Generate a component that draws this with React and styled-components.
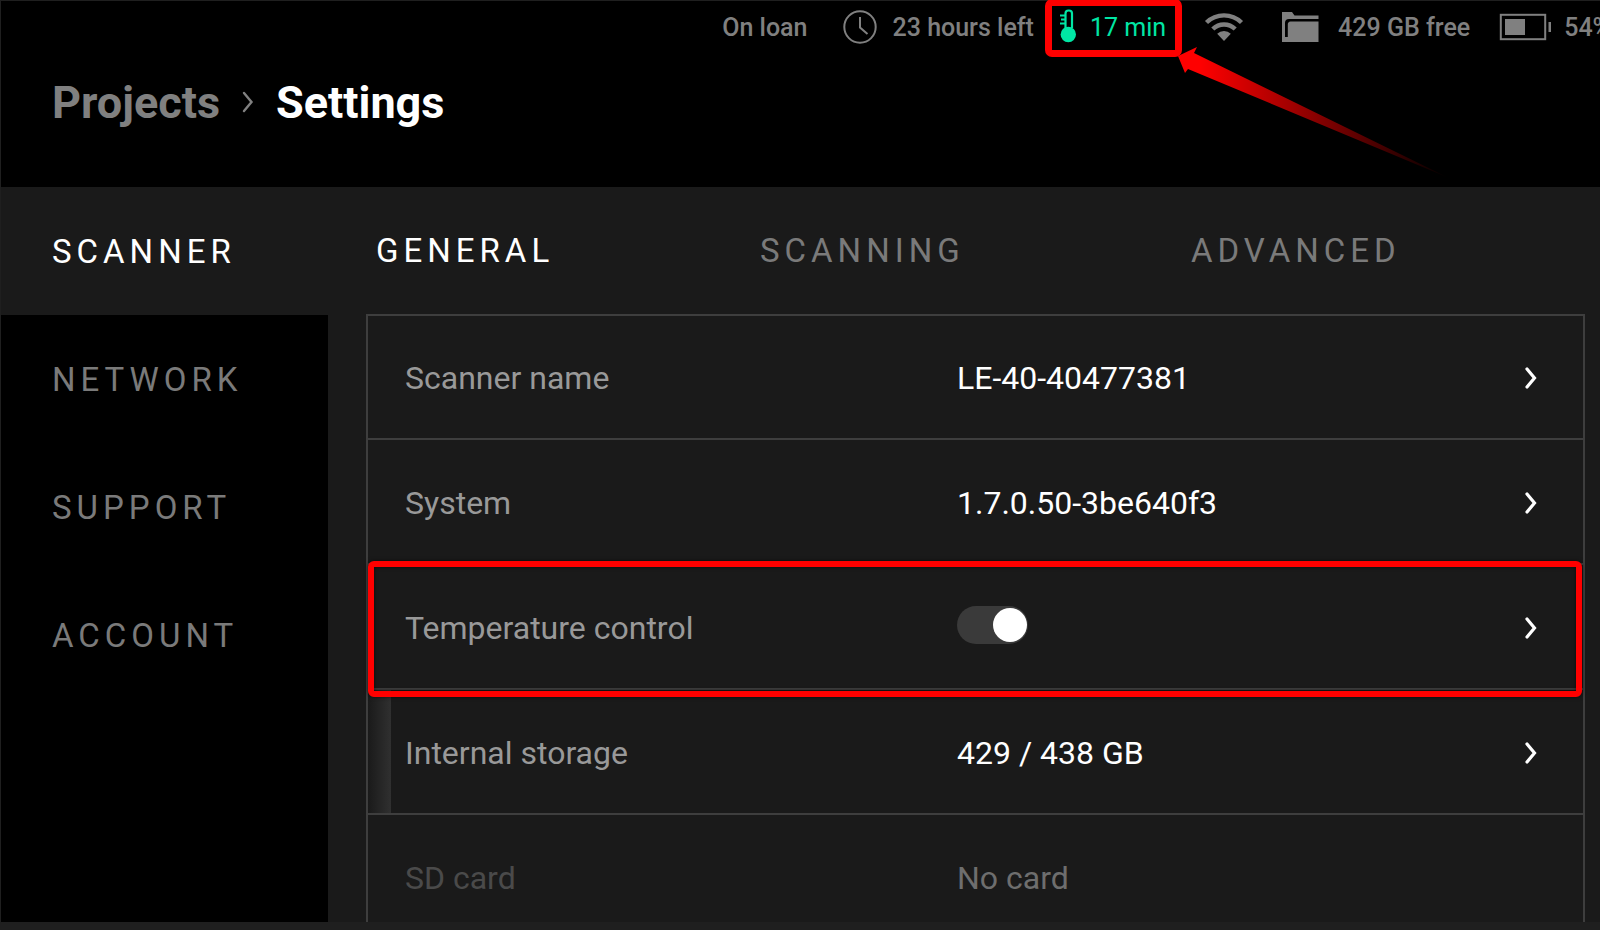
import React, { useState } from 'react';
import styled, { createGlobalStyle } from 'styled-components';

const GlobalStyle = createGlobalStyle`
  * {
    box-sizing: border-box;
  }

  body {
    margin: 0;
    background: #1f1f1f;
    font-family: Roboto, "Liberation Sans", sans-serif;
  }

  a {
    color: inherit;
    text-decoration: none;
  }

  button {
    padding: 0;
    border: none;
    background: none;
    color: inherit;
    font: inherit;
    cursor: pointer;
  }
`;

const Page = styled.div`
  display: flex;
  flex-direction: column;
  height: 100vh;
  padding: 1px 0 8px 1px;
  overflow: hidden;
`;

const Header = styled.header`
  flex-shrink: 0;
  height: 186px;
  background: #000;
`;

const StatusBar = styled.div`
  display: flex;
  justify-content: flex-end;
  align-items: center;
  gap: 26px;
  height: 52px;
  margin-right: -11px;
  color: #808080;
  font-size: 25px;
  font-weight: 500;
  white-space: nowrap;
`;

const Status = styled.div`
  position: relative;
  display: flex;
  align-items: center;
  gap: 14px;
  height: 100%;
  color: ${(props) => (props.$active ? '#00e6a4' : 'inherit')};
  font-weight: ${(props) => (props.$active ? 400 : 'inherit')};

  svg {
    display: block;
    flex-shrink: 0;
    overflow: visible;
  }
`;

const StatusCallout = styled.span`
  position: absolute;
  inset: -2px -16px -4px -15px;
  border: 7px solid #ff0000;
  border-radius: 7px;
`;

const CalloutArrow = styled.svg`
  position: absolute;
  left: calc(100% + 11px);
  top: 45px;
`;

const Breadcrumb = styled.nav`
  display: flex;
  align-items: center;
  height: 98px;
  padding-left: 51px;
  gap: 22px;
  color: #808080;
  font-size: 45px;
  font-weight: 700;
`;

const Current = styled.h1`
  margin: 0;
  color: #fff;
  font-size: 45px;
  font-weight: 700;
`;

const Body = styled.div`
  display: flex;
  flex: 1;
  min-height: 0;
  overflow: hidden;
  background: #1a1a1a;
`;

const Sidebar = styled.nav`
  flex-shrink: 0;
  width: 327px;
  background: #000;
`;

const SideLink = styled.a`
  display: flex;
  align-items: center;
  height: 128px;
  padding-left: 51px;
  background: ${(props) => (props.$active ? '#1a1a1a' : 'transparent')};
  color: ${(props) => (props.$active ? '#fff' : '#7a7a7a')};
  font-size: 33px;
  letter-spacing: 5px;
`;

const Content = styled.main`
  flex: 1;
  min-width: 0;
  padding: 0 15px 0 38px;
`;

const Tabs = styled.div`
  display: grid;
  grid-template-columns: 384fr 431fr 394fr;
  align-items: center;
  height: 127px;
  padding-left: 10px;
`;

const Tab = styled.button`
  justify-self: start;
  color: ${(props) => (props.$active ? '#fff' : '#7a7a7a')};
  font-size: 33px;
  letter-spacing: 5px;
`;

const Rows = styled.div`
  border: 2px solid #3e3e3e;
`;

const Row = styled.div`
  position: relative;
  display: grid;
  grid-template-columns: 552fr 568fr 12px;
  align-items: center;
  height: ${(props) => (props.$first ? 124 : 125)}px;
  padding: 2px 46px 0 37px;
  border-bottom: 2px solid #3e3e3e;
  color: ${(props) => (props.$disabled ? '#6e6e6e' : '#fff')};
  font-size: 32px;
`;

const Label = styled.label`
  color: ${(props) => (props.$disabled ? '#4a4a4a' : '#999')};
`;

const UsageBar = styled.span`
  position: absolute;
  top: 0;
  bottom: 0;
  left: 0;
  background: linear-gradient(to right, #1a1a1a, #303030);
`;

const RowCallout = styled.span`
  position: absolute;
  z-index: 1;
  inset: -4px 1px -9px 0;
  border: 6px solid #ff0000;
  border-radius: 6px;
  box-shadow: 0 0 4px rgba(0, 0, 0, 0.6), inset 0 0 4px rgba(0, 0, 0, 0.6);
  pointer-events: none;
`;

const Switch = styled.input`
  appearance: none;
  display: flex;
  align-items: center;
  width: 71px;
  height: 38px;
  margin: 0 0 6px;
  padding: 0 1px 0 2px;
  border-radius: 19px;
  background: #3a3a3a;
  cursor: pointer;

  &::before {
    content: "";
    width: 34px;
    height: 34px;
    border-radius: 50%;
    background: #fff;
  }

  &:checked::before {
    margin-left: auto;
  }
`;

const ClockIcon = () => (
  <svg width="45" height="36" viewBox="-1 0 45 36" fill="none" stroke="currentColor" strokeWidth="2">
    <circle cx="25" cy="18" r="15.7" />
    <path d="M25 8v10.500l7.500 6.500" />
  </svg>
);

const ThermometerIcon = () => (
  <svg width="16" height="36" viewBox="0 0 16 36">
    <path d="M5.500 19V4.500a3 3 0 0 1 3-3h.500a3 3 0 0 1 3 3V19" fill="none" stroke="currentColor" strokeWidth="2.200" />
    <path d="M0 6.500h5M1 10.500h4M0 14.500h5" stroke="currentColor" strokeWidth="1.800" />
    <circle cx="8.300" cy="25.500" r="7.700" fill="currentColor" />
  </svg>
);

const WifiIcon = () => (
  <svg width="66" height="36" viewBox="-2 0 66 36">
    <g fill="none" stroke="currentColor" strokeWidth="4.400">
      <path d="M12.500 13.500a25 25 0 0 1 35 0" />
      <path d="M18.800 20a16 16 0 0 1 22.400 0" />
    </g>
    <path d="M23.200 24.700a10 10 0 0 1 13.600 0L30 32z" fill="currentColor" />
  </svg>
);

const FolderIcon = () => (
  <svg width="40" height="36" viewBox="4 0 40 36" fill="currentColor">
    <path d="M2 3h10l2.500 3.500H38.500V10H9a4 4 0 0 0-4 4v14h1.500V33H2z" />
    <path d="M10.500 12.500h28V33H5V28h2.800V15.500a3 3 0 0 1 2.700-3z" />
  </svg>
);

const BatteryIcon = () => (
  <svg width="54" height="36" viewBox="-2 0 54 36">
    <rect x="2.800" y="5.800" width="44.400" height="24.400" fill="none" stroke="currentColor" strokeWidth="2" />
    <rect x="7" y="10" width="20" height="16" fill="currentColor" />
    <rect x="50.500" y="13" width="2.500" height="10" fill="currentColor" />
  </svg>
);

const Chevron = ({ width = 3.2 }) => (
  <svg width="12" height="22" viewBox="0 0 12 22" fill="none" stroke="currentColor" strokeWidth={width}>
    <path d="M2 2l7.500 9L2 20" strokeLinecap="round" />
  </svg>
);

const sections = ['SCANNER', 'NETWORK', 'SUPPORT', 'ACCOUNT'];
const tabs = ['GENERAL', 'SCANNING', 'ADVANCED'];

const OpenButton = ({ name }) => (
  <button type="button" aria-label={`Open ${name}`}>
    <Chevron />
  </button>
);

const App = () => {
  const [tab, setTab] = useState('GENERAL');
  const [heating, setHeating] = useState(true);

  return (
    <>
      <GlobalStyle />
      <Page>
        <Header>
          <StatusBar>
            <Status>On loan</Status>
            <Status>
              <ClockIcon />
              23 hours left
            </Status>
            <Status $active>
              <ThermometerIcon />
              17 min
              <StatusCallout />
              <CalloutArrow width="274" height="134" viewBox="0 0 274 134">
                <defs>
                  <linearGradient id="fade" x1="0" y1="0" x2="1" y2="0">
                    <stop offset="0.080" stopColor="#f00" />
                    <stop offset="1" stopColor="#f00" stopOpacity="0" />
                  </linearGradient>
                </defs>
                <path d="M1 10L20 1L17 7L272 132L11 23L8 27Z" fill="url(#fade)" />
              </CalloutArrow>
            </Status>
            <Status>
              <WifiIcon />
            </Status>
            <Status>
              <FolderIcon />
              429 GB free
            </Status>
            <Status>
              <BatteryIcon />
              54%
            </Status>
          </StatusBar>
          <Breadcrumb>
            <a href="#projects">Projects</a>
            <Chevron width={2.4} />
            <Current>Settings</Current>
          </Breadcrumb>
        </Header>

        <Body>
          <Sidebar>
            {sections.map((name) => (
              <SideLink key={name} href={`#${name.toLowerCase()}`} $active={name === 'SCANNER'}>
                {name}
              </SideLink>
            ))}
          </Sidebar>
          <Content>
            <Tabs role="tablist">
              {tabs.map((name) => (
                <Tab key={name} role="tab" aria-selected={tab === name} $active={tab === name} onClick={() => setTab(name)}>
                  {name}
                </Tab>
              ))}
            </Tabs>
            <Rows>
              <Row $first>
                <Label as="span">Scanner name</Label>
                <span>LE-40-40477381</span>
                <OpenButton name="scanner name" />
              </Row>
              <Row>
                <Label as="span">System</Label>
                <span>1.7.0.50-3be640f3</span>
                <OpenButton name="system" />
              </Row>
              <Row>
                <Label htmlFor="temperature">Temperature control</Label>
                <Switch
                  id="temperature"
                  type="checkbox"
                  checked={heating}
                  onChange={(e) => setHeating(e.target.checked)}
                />
                <OpenButton name="temperature control" />
                <RowCallout />
              </Row>
              <Row>
                {/* 8.3 of 438 GB in use */}
                <UsageBar style={{ width: `${(8.3 / 438) * 100}%` }} />
                <Label as="span">Internal storage</Label>
                <span>429 / 438 GB</span>
                <OpenButton name="internal storage" />
              </Row>
              <Row $disabled>
                <Label as="span" $disabled>SD card</Label>
                <span>No card</span>
              </Row>
            </Rows>
          </Content>
        </Body>
      </Page>
    </>
  );
};

export default App;
